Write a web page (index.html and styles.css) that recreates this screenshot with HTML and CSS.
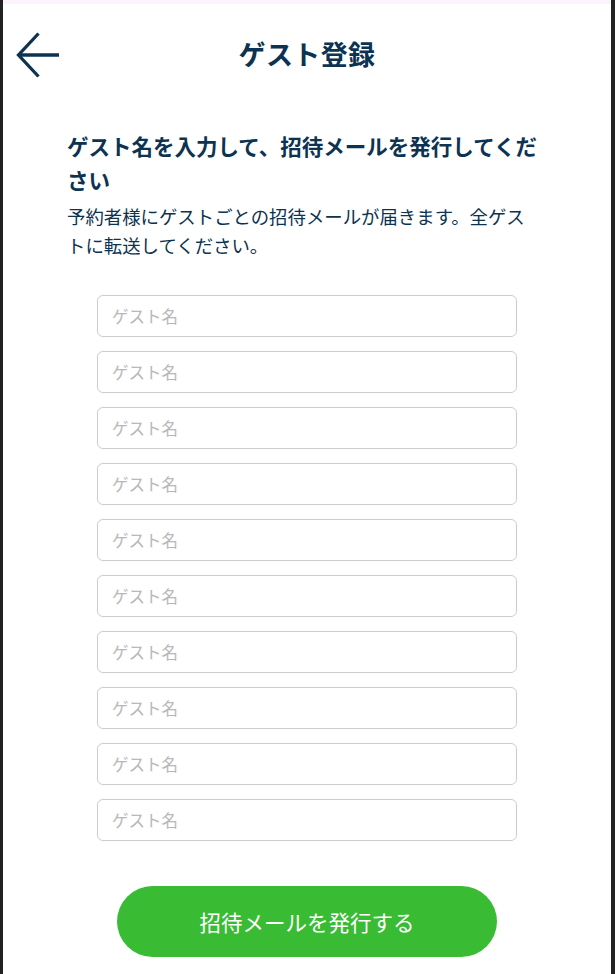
FILE: index.html
```html
<!DOCTYPE html>
<html lang="ja">
<head>
<meta charset="utf-8">
<title>ゲスト登録</title>
<link rel="stylesheet" href="styles.css">
</head>
<body>
<div class="frame">
  <div class="topstrip"></div>
  <header class="header">
    <button class="back" aria-label="戻る">
      <svg width="48" height="48" viewBox="0 0 48 48" fill="none" stroke="#0c3352" stroke-width="3.3" stroke-linecap="butt" stroke-linejoin="miter">
        <path d="M24.5 3.5 L4.5 25 L24.5 46.5"/>
        <path d="M5 25 H45"/>
      </svg>
    </button>
    <h1 class="title">ゲスト登録</h1>
    <div></div>
  </header>
  <main class="content">
    <h2 class="heading">ゲスト名を入力して、招待メールを発行してください</h2>
    <p class="desc">予約者様にゲストごとの招待メールが届きます。全ゲストに転送してください。</p>
    <form class="form">
      <div class="fields">
        <input class="field" type="text" placeholder="ゲスト名">
        <input class="field" type="text" placeholder="ゲスト名">
        <input class="field" type="text" placeholder="ゲスト名">
        <input class="field" type="text" placeholder="ゲスト名">
        <input class="field" type="text" placeholder="ゲスト名">
        <input class="field" type="text" placeholder="ゲスト名">
        <input class="field" type="text" placeholder="ゲスト名">
        <input class="field" type="text" placeholder="ゲスト名">
        <input class="field" type="text" placeholder="ゲスト名">
        <input class="field" type="text" placeholder="ゲスト名">
      </div>
      <button class="submit" type="button">招待メールを発行する</button>
    </form>
  </main>
</div>
</body>
</html>
```
FILE: styles.css
```css
* { box-sizing: border-box; }
html, body {
  margin: 0;
  padding: 0;
  background: #222222;
  height: 974px;
  overflow: hidden;
}
body {
  font-family: "Noto Sans CJK JP", "Noto Sans", sans-serif;
  color: #0c3352;
}
.frame {
  margin-left: 3px;
  width: 608px;
  height: 974px;
  background: #ffffff;
  overflow: hidden;
}
.topstrip {
  height: 4px;
  background: #fcf3fc;
}
.header {
  height: 98px;
  display: grid;
  grid-template-columns: 1fr auto 1fr;
  align-items: center;
}
.back {
  justify-self: start;
  margin-left: 11px;
  margin-top: 2px;
  padding: 0;
  border: none;
  background: none;
  width: 48px;
  height: 48px;
  display: flex;
}
.title {
  margin: 0;
  font-size: 27px;
  font-weight: 700;
  line-height: 1;
  letter-spacing: 0.4px;
}
.content {
  padding: 0 0 0 64px;
}
.heading {
  margin: 27px 0 0;
  width: 476px;
  font-size: 21.5px;
  font-weight: 700;
  line-height: 34px;
}
.desc {
  margin: 5px 0 0;
  width: 476px;
  font-size: 18.4px;
  font-weight: 400;
  line-height: 29px;
}
.form {
  margin-left: -64px;
  display: flex;
  flex-direction: column;
  align-items: center;
  padding-top: 35px;
}
.fields {
  display: flex;
  flex-direction: column;
  gap: 14px;
}
.field {
  width: 420px;
  height: 42px;
  border: 1.5px solid #cccccc;
  border-radius: 6px;
  padding: 0 14px;
  font-family: inherit;
  font-size: 16.5px;
  color: #0c3352;
  background: #ffffff;
  outline: none;
}
.field::placeholder {
  color: #b8b8b8;
}
.submit {
  margin-top: 45px;
  width: 380px;
  height: 71px;
  border: none;
  border-radius: 36px;
  background: #39bb34;
  color: #ffffff;
  font-family: inherit;
  font-size: 21.5px;
  font-weight: 400;
  letter-spacing: 0;
}
```
